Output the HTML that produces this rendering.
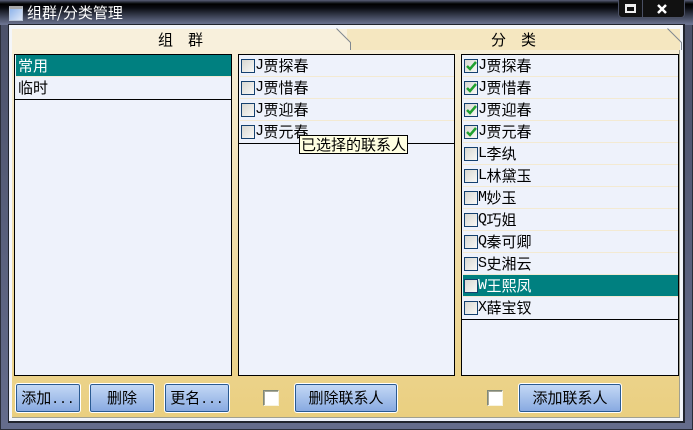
<!DOCTYPE html>
<html><head><meta charset="utf-8"><style>
html,body{margin:0;padding:0;background:#000}
#w{position:relative;width:693px;height:430px;overflow:hidden;background:linear-gradient(#4a5068,#646c8c);box-shadow:inset 0 -1px 0 #2a2e3a,inset -1px 0 0 #2a2e3a,inset 1px 0 0 #2a2e3a;font:15px/22px "WenQuanYi Zen Hei","Noto Sans CJK SC",sans-serif;color:#000}
#w div{position:absolute;box-sizing:border-box}
.tb{left:0;top:0;width:693px;height:25px;background:linear-gradient(#5a6078 0,#2a2e3a 2px,#000 4px,#0a0c12 8px,#3a4052 16px,#6a7290 24px)}
.t{left:27px;top:2px;color:#fff;white-space:nowrap}
.list{background:#eef2fb;border:1px solid #000}
.r{left:1px;height:22px;border-bottom:1px solid #f3ead2;white-space:pre;padding-left:2px;line-height:21px}
.sel{background:#008080;color:#fff;border-bottom:1px solid #f3ead2}
.cb{left:1px;top:4px;width:14px;height:14px;border:1px solid #14406e;background:linear-gradient(135deg,#d8d8d2,#f8f8f6)}
.r span{position:absolute;left:15px;top:0}
.btn b{font:13px/21px "Liberation Mono",monospace}
.r b{display:inline-block;width:8.500px;font:15px/21px "Liberation Mono",monospace;vertical-align:top}
.btn{top:383px;height:30px;border:1px solid #fff;border-radius:3px;background:linear-gradient(#c6daf6,#86a8e0);box-shadow:inset 0 0 0 1px #2a5a92;text-align:center;line-height:28px;white-space:pre}
.ck{top:390px;width:16px;height:16px;background:#fff;border:1px solid #f8f4e0;border-top-color:#808878;border-left-color:#808878;box-shadow:inset 1px 1px 0 #a8a898}
</style></head><body><div id="w">
<div class="tb"></div>
<div style="left:9px;top:6px;width:14px;height:15px;background:linear-gradient(135deg,#8fb4ea,#dfe8f8);border:1px solid #b8c4d8;border-top:3px solid #a8a8a8"></div>
<div class="t">组群/分类管理</div>
<div style="left:618px;top:0;width:67px;height:18px;background:#111;border:1px solid #4a5064;border-top:0;border-radius:0 0 4px 4px"></div>
<div style="left:642px;top:0;width:1px;height:17px;background:#4a5064"></div>
<div style="left:625px;top:4px;width:11px;height:9px;border:2px solid #eee;border-top-width:3px"></div>
<svg style="position:absolute;left:656px;top:4px" width="12" height="10"><path d="M2 1 L10 9 M10 1 L2 9" stroke="#fff" stroke-width="2.500" fill="none"/></svg>

<div style="left:8px;top:24px;width:677px;height:399px;background:#eef2fb;border:1px solid #20242e;border-right-width:2px;border-bottom-width:2px"></div>
<div style="left:10px;top:25px;width:672px;height:394px;background:#f4f6fa"></div>
<div style="left:12px;top:29px;width:335px;height:21px;background:#f8f0dc"></div>
<div style="left:347px;top:29px;width:333px;height:21px;background:#f5e7c0"></div>
<svg style="position:absolute;left:330px;top:25px" width="30" height="28"><polygon points="6,4 21,18 21,25 0,25 0,4" fill="#f8f0dc"/><path d="M6.500 3.500 L20.500 17.500 V25.500" fill="none" stroke="#808890"/></svg>
<svg style="position:absolute;left:660px;top:25px" width="25" height="28"><polygon points="0,4 8,4 20,17 20,25 0,25" fill="#f5e7c0"/><path d="M7.500 3.500 L21.500 17.500 V25" fill="none" stroke="#808890"/></svg>
<div style="left:158px;top:29px;white-space:pre">组<i style="margin-left:15px;font-style:normal">群</i></div>
<div style="left:491px;top:29px;white-space:pre">分<i style="margin-left:15px;font-style:normal">类</i></div>
<div style="left:12px;top:50px;width:668px;height:368px;background:linear-gradient(#f7eed6,#eacf80);border-right:1px solid #a0a090;border-bottom:1px solid #a0a090"></div>

<div class="list" style="left:14px;top:54px;width:218px;height:322px">
<div class="r sel" style="top:0;left:1px;width:215px">常用</div>
<div class="r" style="top:22px;width:215px;border-bottom:0">临时</div>
<div style="left:0;top:44px;width:216px;height:1px;background:#000"></div>
</div>

<div class="list" style="left:238px;top:54px;width:217px;height:322px">
<div class="r" style="top:0;width:214px"><div class="cb"></div><span><b>J</b>贾探春</span></div>
<div class="r" style="top:22px;width:214px"><div class="cb"></div><span><b>J</b>贾惜春</span></div>
<div class="r" style="top:44px;width:214px"><div class="cb"></div><span><b>J</b>贾迎春</span></div>
<div class="r" style="top:66px;width:214px;border-bottom:0"><div class="cb"></div><span><b>J</b>贾元春</span></div>
<div style="left:0;top:88px;width:215px;height:1px;background:#000"></div>
</div>

<div class="list" style="left:461px;top:54px;width:218px;height:322px">
<div class="r" style="top:0;width:215px"><div class="cb"><svg style="position:absolute;left:0;top:0" width="12" height="12"><path d="M2 6 L5 9 L11 2" fill="none" stroke="#20a030" stroke-width="2.500"/></svg></div><span><b>J</b>贾探春</span></div>
<div class="r" style="top:22px;width:215px"><div class="cb"><svg style="position:absolute;left:0;top:0" width="12" height="12"><path d="M2 6 L5 9 L11 2" fill="none" stroke="#20a030" stroke-width="2.500"/></svg></div><span><b>J</b>贾惜春</span></div>
<div class="r" style="top:44px;width:215px"><div class="cb"><svg style="position:absolute;left:0;top:0" width="12" height="12"><path d="M2 6 L5 9 L11 2" fill="none" stroke="#20a030" stroke-width="2.500"/></svg></div><span><b>J</b>贾迎春</span></div>
<div class="r" style="top:66px;width:215px"><div class="cb"><svg style="position:absolute;left:0;top:0" width="12" height="12"><path d="M2 6 L5 9 L11 2" fill="none" stroke="#20a030" stroke-width="2.500"/></svg></div><span><b>J</b>贾元春</span></div>
<div class="r" style="top:88px;width:215px"><div class="cb"></div><span><b>L</b>李纨</span></div>
<div class="r" style="top:110px;width:215px"><div class="cb"></div><span><b>L</b>林黛玉</span></div>
<div class="r" style="top:132px;width:215px"><div class="cb"></div><span><b>M</b>妙玉</span></div>
<div class="r" style="top:154px;width:215px"><div class="cb"></div><span><b>Q</b>巧姐</span></div>
<div class="r" style="top:176px;width:215px"><div class="cb"></div><span><b>Q</b>秦可卿</span></div>
<div class="r" style="top:198px;width:215px"><div class="cb"></div><span><b>S</b>史湘云</span></div>
<div class="r sel" style="top:220px;width:215px"><div class="cb"></div><span><b>W</b>王熙凤</span></div>
<div class="r" style="top:242px;width:215px;border-bottom:0"><div class="cb"></div><span><b>X</b>薛宝钗</span></div>
<div style="left:0;top:264px;width:216px;height:1px;background:#000"></div>
</div>

<div style="left:299px;top:135px;width:109px;height:19px;background:#ffffe1;border:1px solid #000;line-height:17px;padding-left:1px;white-space:nowrap">已选择的联系人</div>

<div class="btn" style="left:15px;width:66px">添加<b>...</b></div>
<div class="btn" style="left:89px;width:66px">删除</div>
<div class="btn" style="left:164px;width:66px">更名<b>...</b></div>
<div class="ck" style="left:263px"></div>
<div class="btn" style="left:294px;width:104px">删除联系人</div>
<div class="ck" style="left:487px"></div>
<div class="btn" style="left:518px;width:104px">添加联系人</div>
</div></body></html>
